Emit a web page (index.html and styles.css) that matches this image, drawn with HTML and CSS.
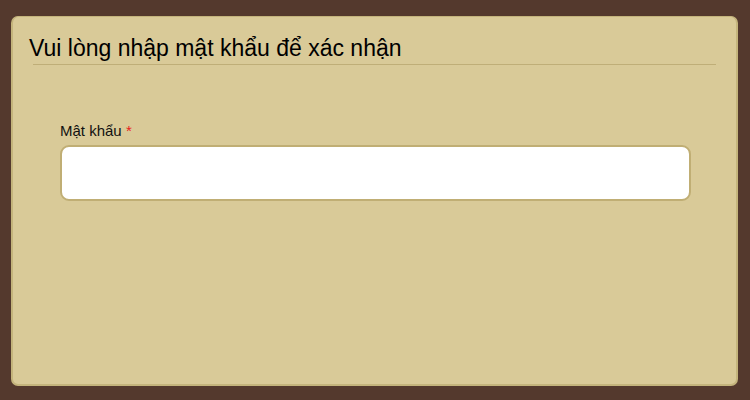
FILE: index.html
```html
<!DOCTYPE html>
<html lang="vi">
<head>
<meta charset="utf-8">
<link rel="stylesheet" href="styles.css">
</head>
<body>
<div class="panel">
  <div class="panel-head">
    <h1 class="title">Vui lòng nhập mật khẩu để xác nhận</h1>
  </div>
  <form class="form">
    <label class="label" for="pw">Mật khẩu <span class="req">*</span></label>
    <input class="input" id="pw" type="password">
  </form>
</div>
</body>
</html>
```
FILE: styles.css
```css
html, body {
  margin: 0;
  padding: 0;
  height: 100%;
}
body {
  background: #54392d;
  font-family: "Liberation Sans", Arial, sans-serif;
  padding: 16px 12px 14px 11px;
  box-sizing: border-box;
}
.panel {
  height: 100%;
  box-sizing: border-box;
  background: #d9ca98;
  border: 2px solid #c4b47c;
  border-top-width: 1px;
  border-radius: 7px;
  display: flex;
  flex-direction: column;
}
.panel-head {
  margin: 0 20px 0 20px;
  border-bottom: 1px solid #bfae78;
  padding: 18px 0 3px 0;
}
.title {
  margin: 0 0 0 -4px;
  font-weight: normal;
  font-size: 23px;
  line-height: 26px;
  color: #000;
}
.form {
  display: flex;
  flex-direction: column;
  padding: 57px 45px 0 47px;
}
.label {
  font-size: 15px;
  line-height: 17px;
  color: #111;
  margin-bottom: 6px;
}
.req {
  color: #e8201a;
}
.input {
  height: 56px;
  box-sizing: border-box;
  border: 2px solid #c0ae74;
  border-radius: 9px;
  background: #fff;
  margin: 0;
}
```
